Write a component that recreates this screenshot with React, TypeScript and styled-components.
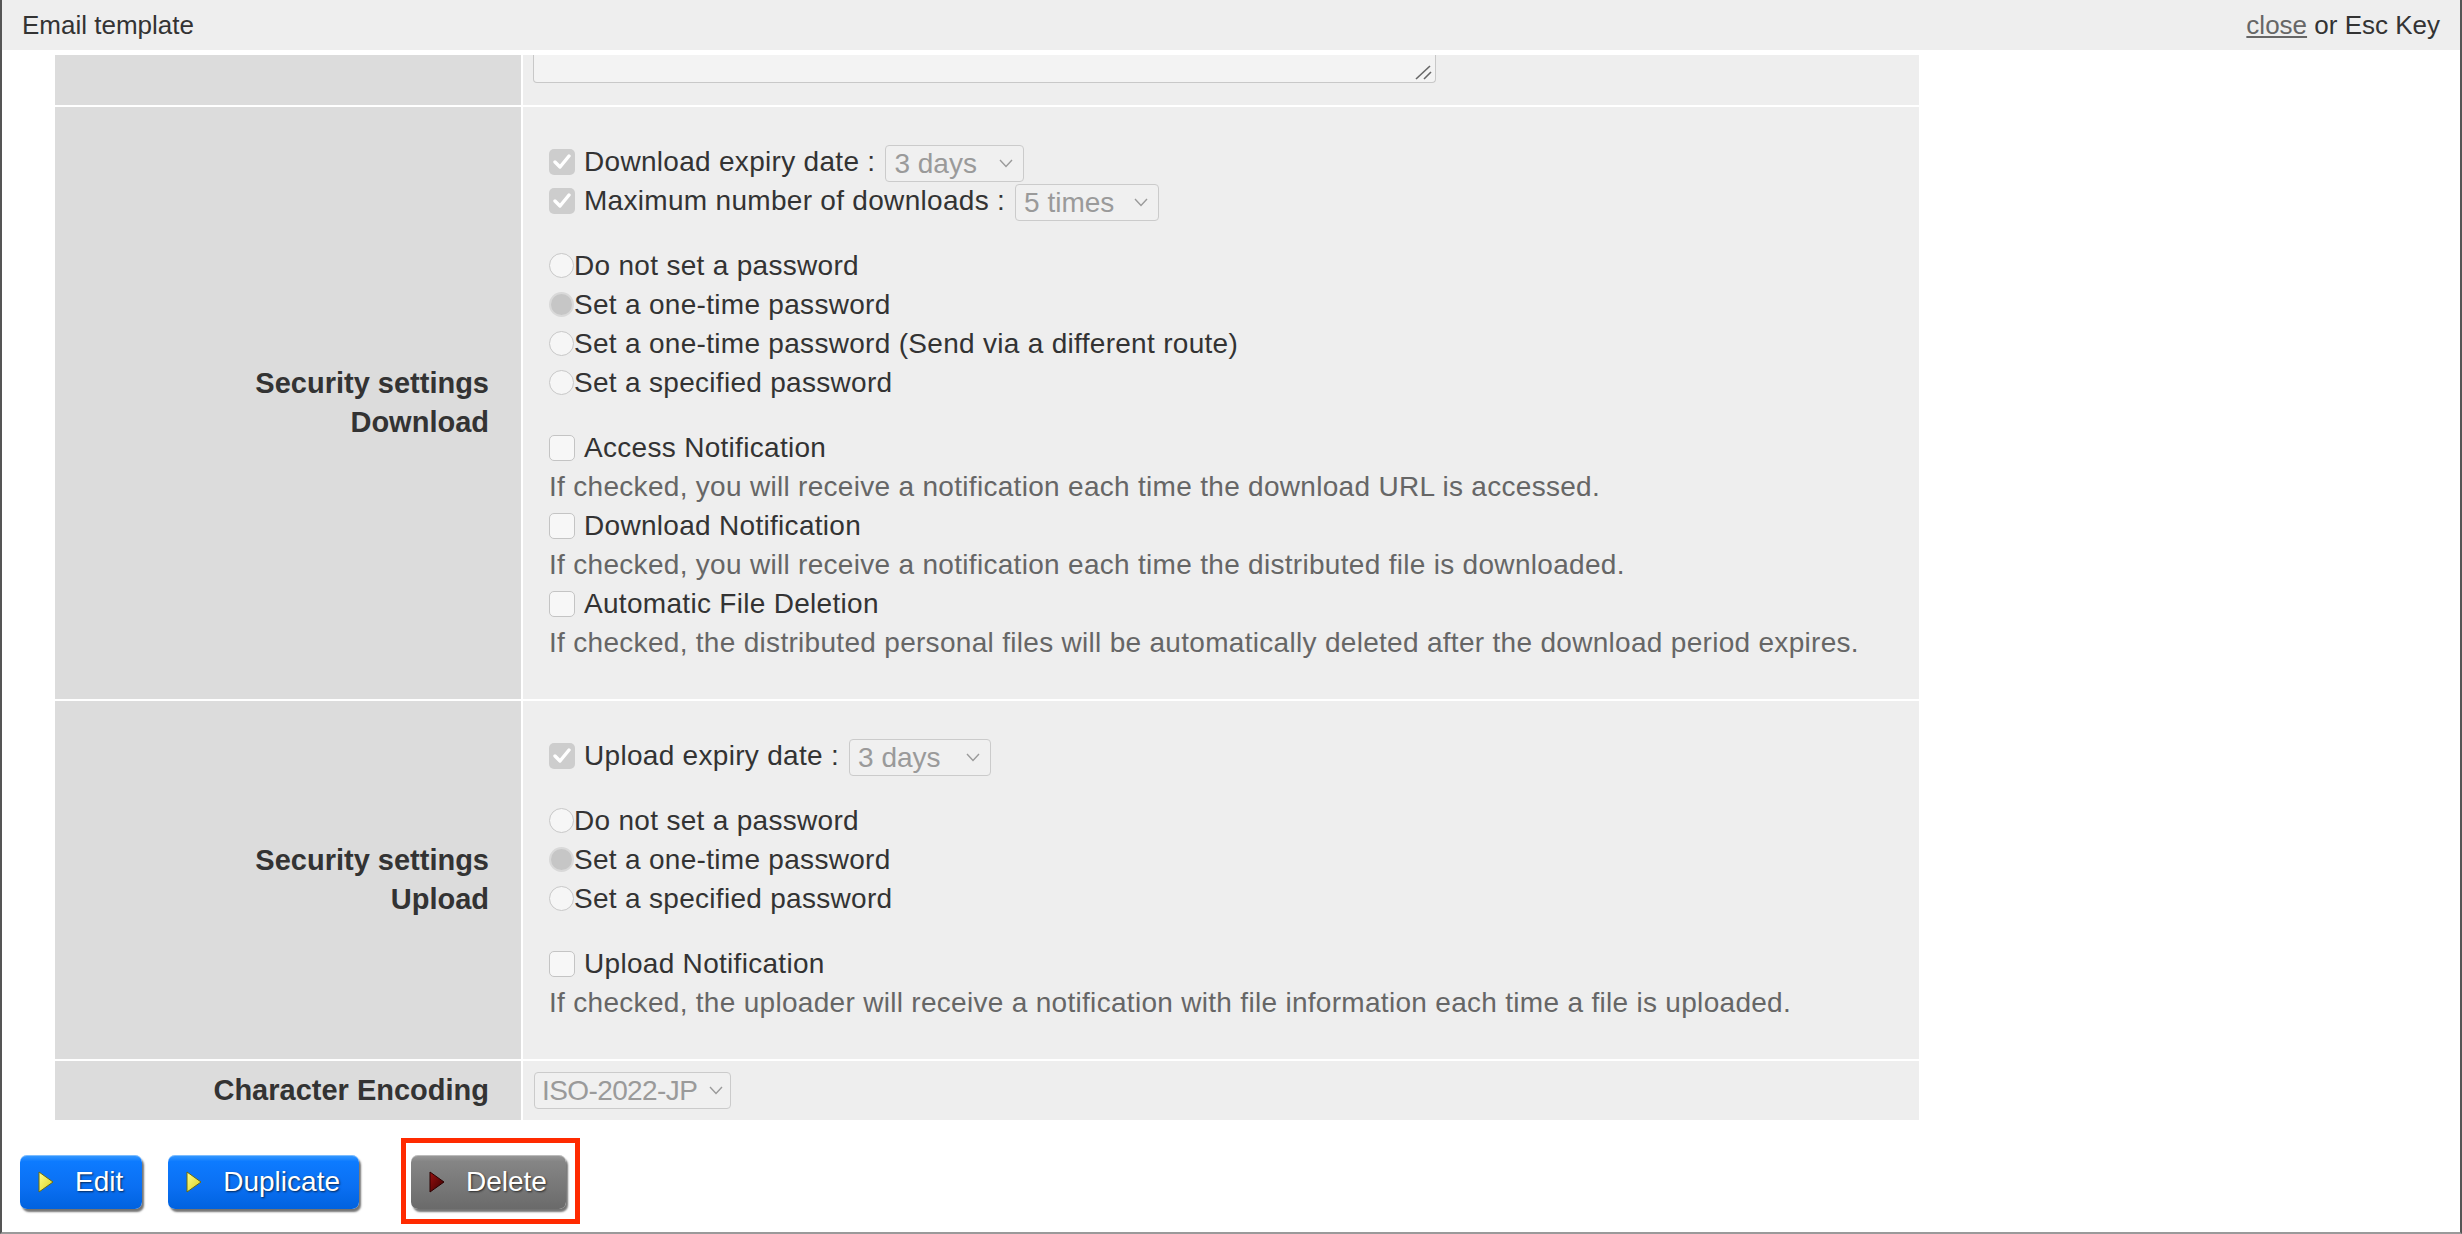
import React from "react";
import styled, { createGlobalStyle } from "styled-components";

const GlobalStyle = createGlobalStyle`
  html, body { margin: 0; padding: 0; background: #fff; }
  body { font-family: "Liberation Sans", Arial, sans-serif; color: #333; }
  * { box-sizing: border-box; }
`;

const Window = styled.div`
  width: 2462px;
  height: 1234px;
  border-left: 2px solid #555;
  border-right: 2px solid #555;
  border-bottom: 2px solid #9a9a9a;
  background: #fff;
  display: flex;
  flex-direction: column;
  overflow: hidden;
`;

const Header = styled.div`
  height: 50px;
  flex: none;
  background: #eee;
  display: flex;
  align-items: center;
  justify-content: space-between;
  padding: 0 20px;
  font-size: 26px;
  color: #333;
`;

const CloseLink = styled.a`
  color: #666;
  text-decoration: underline;
  cursor: pointer;
`;

const Body = styled.div`
  padding: 5px 0 0 53px;
`;

const FormGrid = styled.div`
  display: grid;
  grid-template-columns: 466px 1396px;
  gap: 2px;
`;

const LabelCell = styled.div<{ $h?: number }>`
  background: #dcdcdc;
  display: flex;
  align-items: center;
  justify-content: flex-end;
  text-align: right;
  padding-right: 32px;
  font-size: 29px;
  font-weight: bold;
  line-height: 39px;
  color: #333;
  ${(p) => (p.$h ? `height: ${p.$h}px;` : "")}
`;

const ValueCell = styled.div<{ $pad?: string }>`
  background: #eee;
  padding: ${(p) => p.$pad ?? "0 0 0 10px"};
  display: flex;
  flex-direction: column;
  justify-content: center;
`;

const TextareaStub = styled.div`
  position: relative;
  width: 903px;
  height: 28px;
  background: #f3f3f3;
  border: 1px solid #c8c8c8;
  border-top: none;
  border-radius: 0 0 4px 4px;
`;

const Grip = styled.svg`
  position: absolute;
  right: 2px;
  bottom: 2px;
`;

const Section = styled.div`
  padding: 35px 0 37px 26px;
  display: flex;
  flex-direction: column;
  gap: 26px;
`;

const Block = styled.div`
  display: flex;
  flex-direction: column;
`;

const Line = styled.div<{ $muted?: boolean }>`
  height: 39px;
  display: flex;
  align-items: center;
  font-size: 28px;
  letter-spacing: 0.3px;
  color: ${(p) => (p.$muted ? "#666" : "#333")};
  white-space: nowrap;
`;

const CheckBox = styled.span<{ $checked?: boolean }>`
  width: 26px;
  height: 26px;
  flex: none;
  margin-right: 9px;
  border-radius: 5px;
  display: inline-flex;
  align-items: center;
  justify-content: center;
  background: ${(p) => (p.$checked ? "#cdcdcd" : "#f7f7f7")};
  border: ${(p) => (p.$checked ? "none" : "1px solid #c4c4c4")};
`;

const Radio = styled.span<{ $checked?: boolean }>`
  width: 25px;
  height: 25px;
  flex: none;
  border-radius: 50%;
  background: ${(p) => (p.$checked ? "#c6c6c6" : "#f6f6f6")};
  border: ${(p) => (p.$checked ? "2px solid #d9d9d9" : "1.5px solid #c8c8c8")};
`;

const Select = styled.span<{ $w: number }>`
  width: ${(p) => p.$w}px;
  height: 37px;
  margin-left: 10px;
  margin-top: 4px;
  border: 1px solid #cbcbcb;
  border-radius: 4px;
  background: #f0f0f0;
  display: inline-flex;
  align-items: center;
  justify-content: space-between;
  padding: 0 10px 0 8px;
  color: #9a9a9a;
  font-size: 28px;
  letter-spacing: 0;
`;

const EncodingSelect = styled(Select)`
  margin: 0;
  padding: 0 7px 0 7px;
  letter-spacing: -0.6px;
`;

const Actions = styled.div`
  display: flex;
  align-items: center;
  padding: 35px 0 0 18px;
`;

const ActionButton = styled.button<{ $variant: "blue" | "gray"; $gap?: number }>`
  display: inline-flex;
  align-items: center;
  gap: 21px;
  height: 54px;
  padding: 0 19px 0 18px;
  margin-right: ${(p) => p.$gap ?? 0}px;
  border: none;
  border-radius: 7px;
  background: ${(p) =>
    p.$variant === "blue"
      ? "linear-gradient(#3a9cff 0%, #0d7bff 12%, #0a6ff2 60%, #0062df 100%)"
      : "linear-gradient(#9a9a9a 0%, #858585 12%, #777 60%, #6a6a6a 100%)"};
  box-shadow: 2px 3px 2px rgba(0, 0, 0, 0.55), inset 0 1px 0 rgba(255, 255, 255, 0.35);
  color: #fff;
  font-family: "Liberation Sans", Arial, sans-serif;
  font-size: 28px;
  text-shadow: 1px 1px 2px rgba(0, 0, 0, 0.65);
  cursor: pointer;
`;

const Highlight = styled.span`
  position: relative;
  display: inline-flex;
  &::after {
    content: "";
    position: absolute;
    left: -10px;
    top: -17px;
    right: -14px;
    bottom: -15px;
    border: 5px solid #ff2a00;
    pointer-events: none;
  }
`;

const Check = () => (
  <svg width="18" height="16" viewBox="0 0 18 16">
    <polyline points="2,8 7,13 16,2" fill="none" stroke="#fff" strokeWidth="3.4" strokeLinecap="round" strokeLinejoin="round" />
  </svg>
);

const Chevron = () => (
  <svg width="14" height="9" viewBox="0 0 14 9">
    <polyline points="1,1 7,7.5 13,1" fill="none" stroke="#9a9a9a" strokeWidth="1.4" />
  </svg>
);

const Triangle = ({ dark }: { dark?: boolean }) => {
  const id = dark ? "triDark" : "triYellow";
  return (
    <svg width="16" height="22" viewBox="0 0 16 22">
      <defs>
        <linearGradient id={id} x1="0" y1="0" x2="1" y2="1">
          <stop offset="0" stopColor={dark ? "#9a1010" : "#ffff8a"} />
          <stop offset="1" stopColor={dark ? "#3a0000" : "#d8d020"} />
        </linearGradient>
      </defs>
      <polygon points="1,1 15,11 1,21" fill={`url(#${id})`} stroke={dark ? "#2a0000" : "#6b6a10"} strokeWidth="1" />
    </svg>
  );
};

const CheckLine = ({ checked, children }: { checked?: boolean; children: React.ReactNode }) => (
  <Line>
    <CheckBox $checked={checked}>{checked && <Check />}</CheckBox>
    {children}
  </Line>
);

const RadioLine = ({ checked, children }: { checked?: boolean; children: React.ReactNode }) => (
  <Line>
    <Radio $checked={checked} />
    {children}
  </Line>
);

const Dropdown = ({ w, value }: { w: number; value: string }) => (
  <Select $w={w}>
    {value}
    <Chevron />
  </Select>
);

export default function App() {
  return (
    <>
      <GlobalStyle />
      <Window>
        <Header>
          <span>Email template</span>
          <span>
            <CloseLink>close</CloseLink> or Esc Key
          </span>
        </Header>
        <Body>
          <FormGrid>
            <LabelCell />
            <ValueCell $pad="0 0 22px 10px">
              <TextareaStub>
                <Grip width="20" height="16" viewBox="0 0 20 16">
                  <line x1="3" y1="15" x2="17" y2="2" stroke="#666" strokeWidth="1.6" />
                  <line x1="11" y1="15" x2="18" y2="8" stroke="#666" strokeWidth="1.6" />
                </Grip>
              </TextareaStub>
            </ValueCell>

            <LabelCell>
              Security settings
              <br />
              Download
            </LabelCell>
            <ValueCell $pad="0">
              <Section>
                <Block>
                  <CheckLine checked>
                    Download expiry date :<Dropdown w={139} value="3 days" />
                  </CheckLine>
                  <CheckLine checked>
                    Maximum number of downloads :<Dropdown w={144} value="5 times" />
                  </CheckLine>
                </Block>
                <Block>
                  <RadioLine>Do not set a password</RadioLine>
                  <RadioLine checked>Set a one-time password</RadioLine>
                  <RadioLine>Set a one-time password (Send via a different route)</RadioLine>
                  <RadioLine>Set a specified password</RadioLine>
                </Block>
                <Block>
                  <CheckLine>Access Notification</CheckLine>
                  <Line $muted>If checked, you will receive a notification each time the download URL is accessed.</Line>
                  <CheckLine>Download Notification</CheckLine>
                  <Line $muted>If checked, you will receive a notification each time the distributed file is downloaded.</Line>
                  <CheckLine>Automatic File Deletion</CheckLine>
                  <Line $muted>
                    If checked, the distributed personal files will be automatically deleted after the download period expires.
                  </Line>
                </Block>
              </Section>
            </ValueCell>

            <LabelCell>
              Security settings
              <br />
              Upload
            </LabelCell>
            <ValueCell $pad="0">
              <Section>
                <Block>
                  <CheckLine checked>
                    Upload expiry date :<Dropdown w={142} value="3 days" />
                  </CheckLine>
                </Block>
                <Block>
                  <RadioLine>Do not set a password</RadioLine>
                  <RadioLine checked>Set a one-time password</RadioLine>
                  <RadioLine>Set a specified password</RadioLine>
                </Block>
                <Block>
                  <CheckLine>Upload Notification</CheckLine>
                  <Line $muted>
                    If checked, the uploader will receive a notification with file information each time a file is uploaded.
                  </Line>
                </Block>
              </Section>
            </ValueCell>

            <LabelCell $h={59}>Character Encoding</LabelCell>
            <ValueCell $pad="0 0 0 11px">
              <EncodingSelect $w={197}>
                ISO-2022-JP
                <Chevron />
              </EncodingSelect>
            </ValueCell>
          </FormGrid>
        </Body>
        <Actions>
          <ActionButton $variant="blue" $gap={26}>
            <Triangle />
            Edit
          </ActionButton>
          <ActionButton $variant="blue" $gap={52}>
            <Triangle />
            Duplicate
          </ActionButton>
          <Highlight>
            <ActionButton $variant="gray">
              <Triangle dark />
              Delete
            </ActionButton>
          </Highlight>
        </Actions>
      </Window>
    </>
  );
}
